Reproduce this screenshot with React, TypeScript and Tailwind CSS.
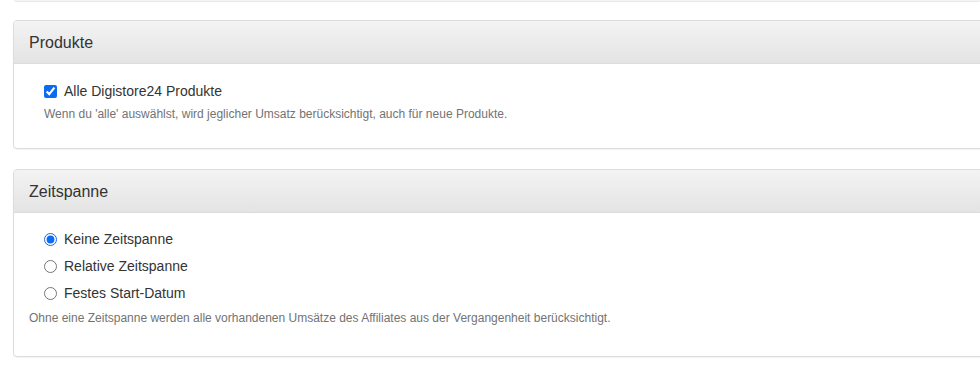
import React from "react";

function Panel({ title, children }: { title: string; children: React.ReactNode }) {
  return (
    <div className="ml-[13px] mr-[-20px] rounded-[4px] border border-[#dcdcdc] bg-white shadow-[0_1px_1px_rgba(0,0,0,0.05)]">
      <div className="h-[43px] rounded-t-[3px] border-b border-[#dcdcdc] bg-gradient-to-b from-[#f3f3f3] to-[#e4e4e4] px-[15px] flex items-center">
        <h3 className="text-[16px] leading-[23px] text-[#333] m-0 font-normal">{title}</h3>
      </div>
      {children}
    </div>
  );
}

export default function App() {
  return (
    <div className="w-[980px] h-[383px] overflow-hidden bg-white" style={{ fontFamily: '"Liberation Sans", Arial, sans-serif' }}>
      <div className="ml-[14px] h-[2px] rounded-b-[3px] border-b border-[#e8e8e8] bg-[#f4f4f4]" />
      <div className="h-[18px]" />
      <Panel title="Produkte">
        <div className="px-[15px] pt-[17px] pb-[25px]">
          <div className="pl-[15px]">
            <label className="flex items-center h-[20px] text-[14px] text-[#333]">
              <input type="checkbox" defaultChecked className="m-0 h-[13px] w-[13px] accent-[#0b6cf0]" />
              <span className="ml-[7px]">Alle Digistore24 Produkte</span>
            </label>
            <p className="mt-[5px] text-[12px] leading-[17px] text-[#737373]">
              Wenn du 'alle' auswählst, wird jeglicher Umsatz berücksichtigt, auch für neue Produkte.
            </p>
          </div>
        </div>
      </Panel>
      <div className="h-[20px]" />
      <Panel title="Zeitspanne">
        <div className="px-[15px] pt-[16px] pb-[29px]">
          <div className="pl-[15px] flex flex-col gap-[7px]">
            {["Keine Zeitspanne", "Relative Zeitspanne", "Festes Start-Datum"].map((t, i) => (
              <label key={t} className="flex items-center h-[20px] text-[14px] text-[#333]">
                <input type="radio" name="zs" defaultChecked={i === 0} className="m-0 h-[13px] w-[13px] accent-[#0b6cf0]" />
                <span className="ml-[7px]">{t}</span>
              </label>
            ))}
          </div>
          <p className="mt-[7px] text-[12px] leading-[17px] text-[#737373]">
            Ohne eine Zeitspanne werden alle vorhandenen Umsätze des Affiliates aus der Vergangenheit berücksichtigt.
          </p>
        </div>
      </Panel>
    </div>
  );
}
